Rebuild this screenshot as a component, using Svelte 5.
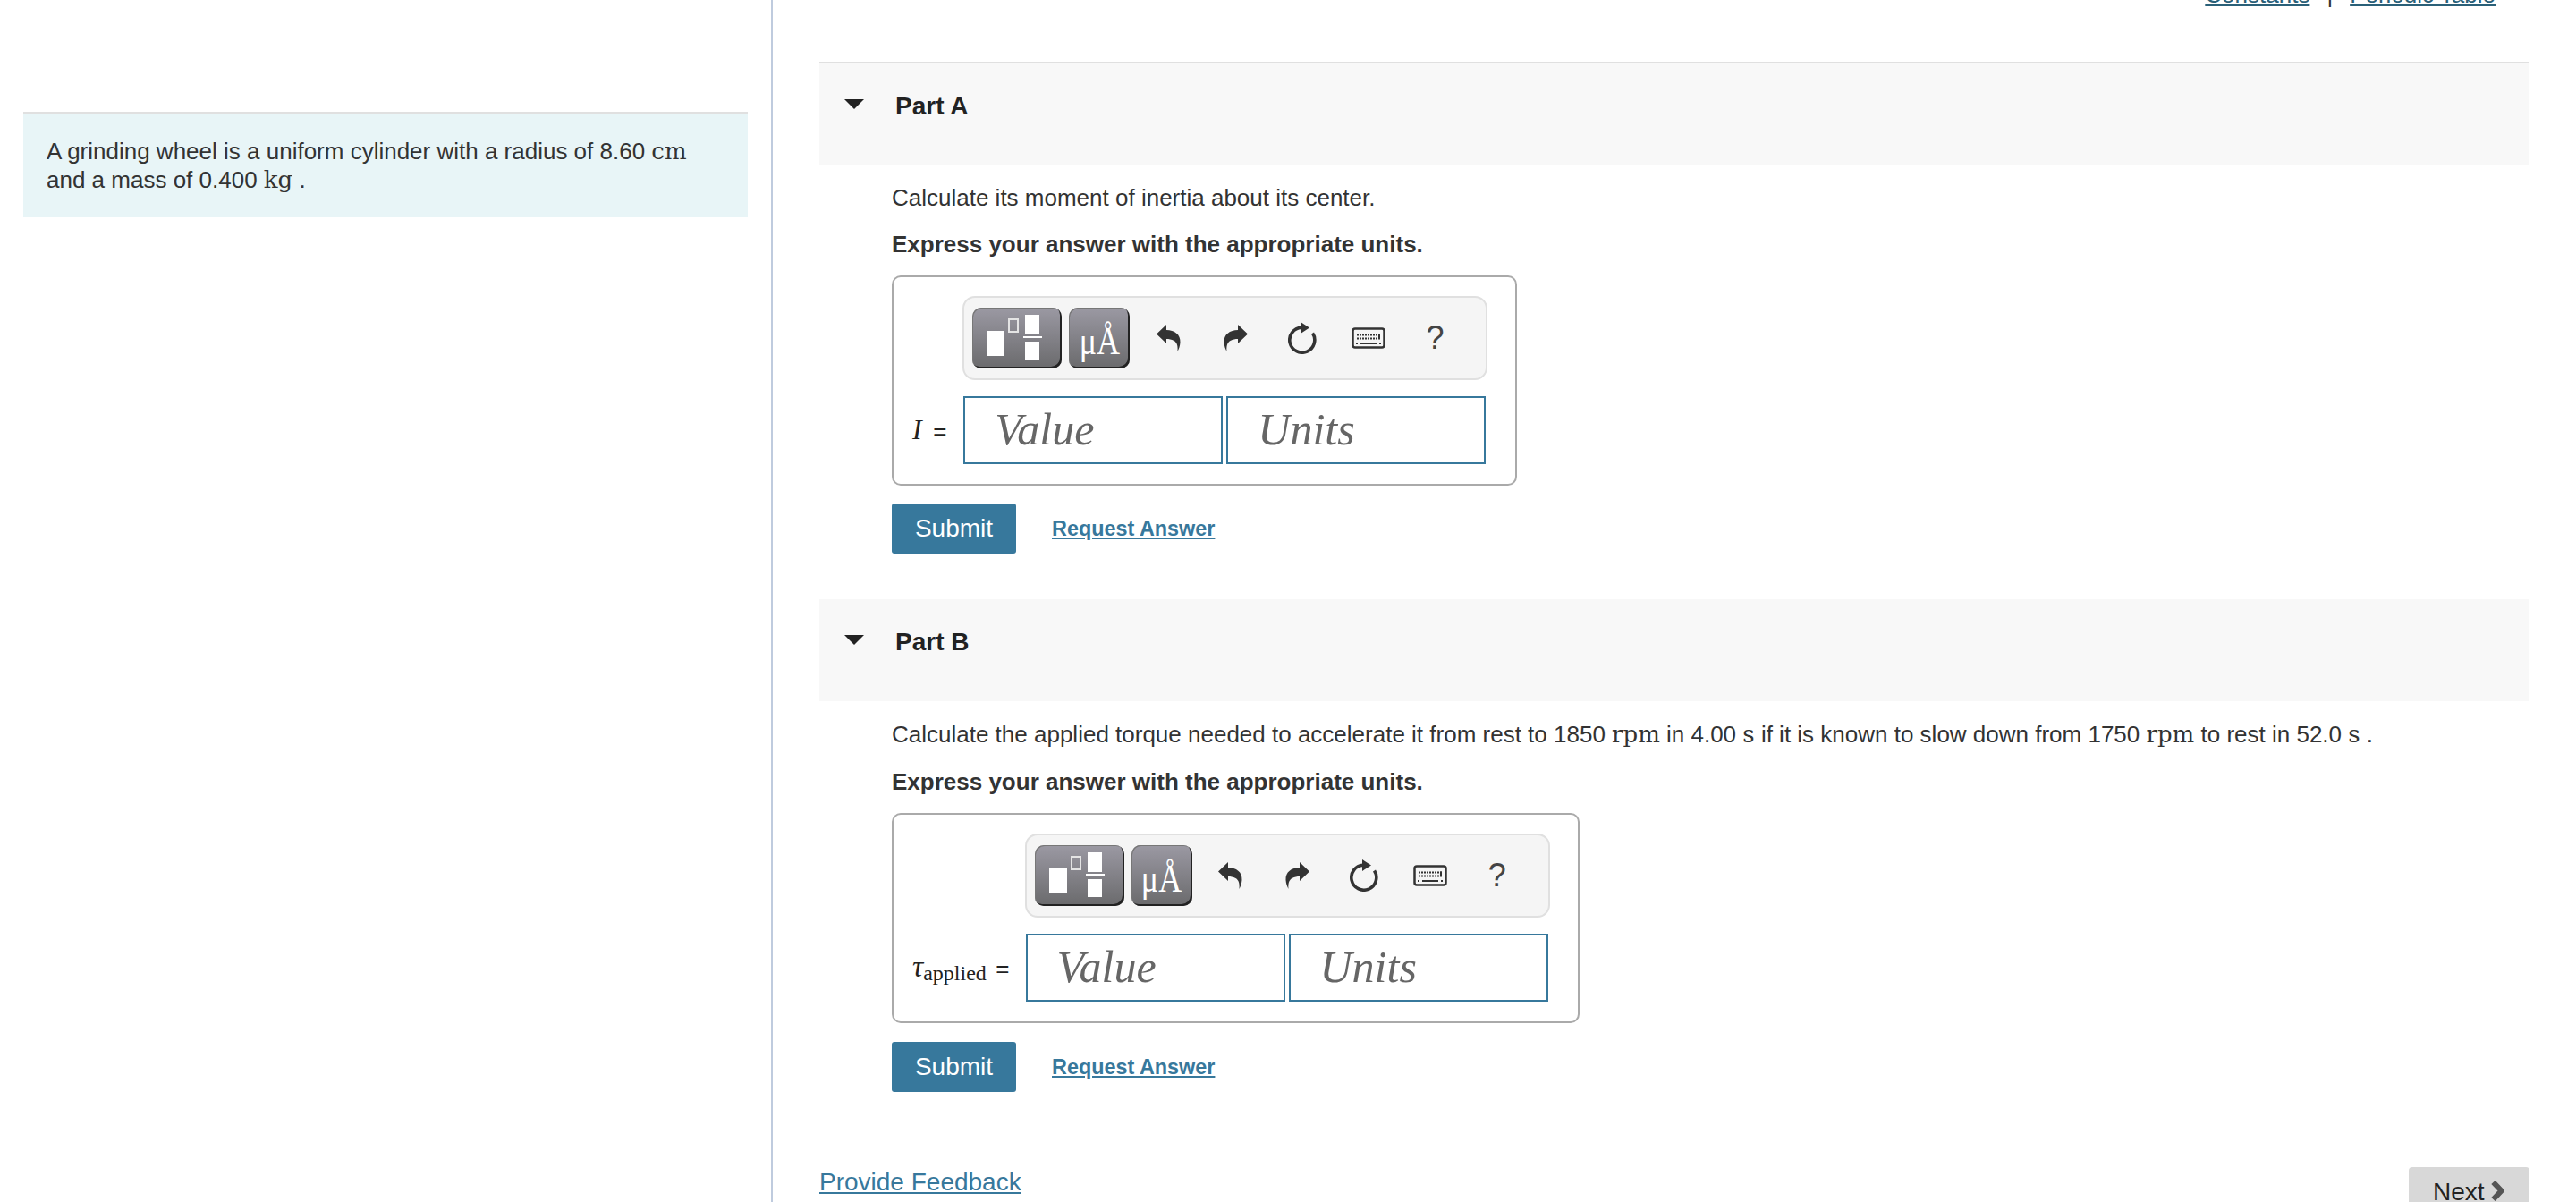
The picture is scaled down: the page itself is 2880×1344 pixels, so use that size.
<script>
	const parts = [
		{ id: 'A', label: 'label-i' },
		{ id: 'B', label: 'label-tau' }
	];
	const keyRows = [
		{ y: 7.5, xs: [6, 9, 12, 15, 18, 21, 24, 27, 30] },
		{ y: 11.5, xs: [6, 9, 12, 15, 18, 21, 24, 27] }
	];
</script>

<div class="page">
	<aside class="side">
		<div class="intro">
			A grinding wheel is a uniform cylinder with a radius of 8.60 <span class="m">cm</span><br />
			and a mass of 0.400 <span class="m">kg</span> .
		</div>
	</aside>

	<main class="main">
		<div class="top-links">
			<a href="#constants">Constants</a>
			<span class="sep">|</span>
			<a href="#table">Periodic Table</a>
		</div>

		{#each parts as part}
			<section class="part part-{part.id}">
				<header class="part-head">
					<svg class="caret" viewBox="0 0 22 11" width="22" height="11"><path d="M0 0H22L11 11Z" fill="#222" /></svg>
					<h2>Part {part.id}</h2>
				</header>
				<div class="part-body">
					{#if part.id === 'A'}
						<p class="lead">Calculate its moment of inertia about its center.</p>
					{:else}
						<p class="lead">
							Calculate the applied torque needed to accelerate it from rest to 1850 <span class="m">rpm</span> in 4.00 <span class="m">s</span>
							if it is known to slow down from 1750 <span class="m">rpm</span> to rest in 52.0 <span class="m">s</span> .
						</p>
					{/if}
					<p class="strong">Express your answer with the appropriate units.</p>

					<div class="answer-box">
						<div class="toolbar">
							<div class="tool tool-frac">
								<svg viewBox="0 0 100 68" width="100" height="68">
									<rect x="16" y="26" width="20" height="28" fill="#fff" />
									<rect x="41" y="13" width="10" height="14" fill="none" stroke="#e4e4e4" stroke-width="2" />
									<rect x="59" y="8" width="16" height="22" fill="#fff" />
									<rect x="57" y="32" width="21" height="2" fill="#fff" />
									<rect x="59" y="38" width="16" height="20" fill="#fff" />
								</svg>
							</div>
							<div class="tool tool-unit"><span>μÅ</span></div>
							<div class="slot">
								<svg viewBox="0 0 28 30" width="28" height="30"><path d="M0 10.5L11 0V6C20 6 27 11 26.5 20C26.2 24 25 27 23.5 30C24 24 23 20 19.5 18C16.5 16.5 14 16 11 16V21Z" fill="#333" /></svg>
							</div>
							<div class="slot">
								<svg viewBox="0 0 28 30" width="28" height="30"><path d="M28 10.5L17 0V6C8 6 1 11 1.5 20C1.8 24 3 27 4.5 30C4 24 5 20 8.5 18C11.5 16.5 14 16 17 16V21Z" fill="#333" /></svg>
							</div>
							<div class="slot">
								<svg viewBox="0 0 32 36" width="32" height="36">
									<path d="M27.5 12.5A14 14 0 1 1 15 6.2" fill="none" stroke="#333" stroke-width="3.6" />
									<path d="M14 0L24 6.5L14 13Z" fill="#333" />
								</svg>
							</div>
							<div class="slot">
								<svg viewBox="0 0 38 24" width="38" height="24">
									<rect x="1.5" y="1.5" width="35" height="21" rx="2.5" fill="#f5f5f5" stroke="#333" stroke-width="2.5" />
									{#each keyRows as row}
										{#each row.xs as x}
											<rect {x} y={row.y} width="2" height="2" fill="#333" />
										{/each}
									{/each}
									<rect x="30" y="7.5" width="2" height="6" fill="#333" />
									<rect x="5" y="17" width="2" height="2" fill="#333" />
									<rect x="10" y="17" width="18" height="2" fill="#333" />
									<rect x="31" y="17" width="2" height="2" fill="#333" />
								</svg>
							</div>
							<div class="slot help">?</div>
						</div>

						<div class="eq-label {part.label}">
							{#if part.id === 'A'}
								<i>I</i> <span class="eq">=</span>
							{:else}
								<i class="tau">τ</i><span class="sub">applied</span> <span class="eq">=</span>
							{/if}
						</div>
						<div class="field">Value</div>
						<div class="field field-units">Units</div>
					</div>

					<div class="actions">
						<button class="submit">Submit</button>
						<a class="request" href="#answer">Request Answer</a>
					</div>
				</div>
			</section>
		{/each}

		<footer class="foot">
			<a class="feedback" href="#feedback">Provide Feedback</a>
			<button class="next">
				Next
				<svg viewBox="0 0 15 23" width="15" height="23"><path d="M2.5 2L11.5 11.5L2.5 21" fill="none" stroke="#555" stroke-width="6" /></svg>
			</button>
		</footer>
	</main>
</div>

<style>
	:global(body) {
		margin: 0;
		background: #fff;
	}

	.page {
		display: flex;
		width: 2880px;
		height: 1344px;
		overflow: hidden;
		font-family: "Liberation Sans", Arial, sans-serif;
		font-size: 26px;
		line-height: 32px;
		color: #333;
	}

	.side {
		flex: 0 0 862px;
		box-sizing: content-box;
		border-right: 2px solid #bfcbde;
		padding-top: 125px;
	}

	.intro {
		margin: 0 26px;
		padding: 25px 26px 26px;
		background: #e8f5f7;
		border-top: 3px solid #e0e0e0;
	}

	.m {
		font-family: "DejaVu Serif", "Liberation Serif", serif;
		font-size: 26px;
		line-height: 0;
	}

	.main {
		flex: 1;
		padding: 0 52px;
		min-width: 0;
	}

	.top-links {
		display: flex;
		justify-content: flex-end;
		gap: 19px;
		margin-top: -22px;
		margin-bottom: 59px;
		padding-right: 38px;
	}

	.top-links a {
		color: #2a6078;
	}

	.sep {
		color: #333;
	}

	.part-head {
		display: flex;
		align-items: flex-start;
		height: 114px;
		box-sizing: border-box;
		background: #f8f8f8;
		padding: 32px 0 0 28px;
	}

	.part-A .part-head {
		height: 115px;
		border-top: 2px solid #e0e0e0;
	}

	.part-B {
		margin-top: 51px;
	}

	.caret {
		margin-top: 8px;
	}

	h2 {
		margin: 0 0 0 35px;
		font-size: 28px;
		line-height: 32px;
		font-weight: 700;
		color: #222;
	}

	.part-body {
		padding-left: 81px;
	}

	p {
		margin: 0;
	}

	.lead {
		margin-top: 21px;
	}

	.strong {
		margin-top: 20px;
		font-weight: 700;
	}

	.part-B .strong {
		margin-top: 21px;
	}

	.answer-box {
		display: inline-grid;
		grid-template-columns: auto 290px 290px;
		column-gap: 4px;
		row-gap: 18px;
		margin-top: 19px;
		padding: 21px 33px 22px 21px;
		border: 2px solid #aaa;
		border-radius: 10px;
		background: #fff;
	}

	.toolbar {
		grid-column: 2 / 4;
		display: flex;
		align-items: center;
		height: 94px;
		box-sizing: border-box;
		margin: 0 -2px 0 -1px;
		padding-left: 9px;
		background: #f5f5f5;
		border: 2px solid #e0e0e0;
		border-radius: 14px;
	}

	.tool {
		height: 68px;
		box-sizing: border-box;
		border-radius: 10px;
		background: linear-gradient(#9b99a3, #6a6a6c);
		box-shadow: inset -2px -2px 0 #222, inset 1px 1px 0 #777;
		color: #fff;
	}

	.tool svg {
		display: block;
	}

	.tool-frac {
		width: 100px;
	}

	.tool-unit {
		width: 68px;
		margin-left: 8px;
		display: flex;
		align-items: center;
		justify-content: center;
		font-family: "Liberation Serif", "Times New Roman", serif;
		font-size: 36px;
	}

	.tool-unit span {
		transform: translateY(3px) scaleY(1.25);
	}

	.slot {
		flex: 0 0 74.5px;
		display: flex;
		align-items: center;
		justify-content: center;
	}

	.tool-unit + .slot {
		margin-left: 6px;
	}

	.help {
		font-size: 36px;
		line-height: 40px;
		color: #444;
	}

	.eq-label {
		grid-column: 1;
		align-self: center;
		padding-right: 14px;
		font-family: "Liberation Serif", "Times New Roman", serif;
		color: #222;
		white-space: nowrap;
	}

	.label-i {
		padding-right: 15px;
	}

	.eq-label i {
		font-size: 32px;
	}

	.eq {
		font-family: "Liberation Sans", Arial, sans-serif;
		font-size: 26px;
		margin-left: 4px;
	}

	.label-i .eq {
		margin-left: 6px;
	}

	.tau {
		font-size: 34px !important;
	}

	.sub {
		font-size: 24px;
		position: relative;
		top: 4px;
	}

	.field {
		height: 76px;
		box-sizing: border-box;
		padding-left: 33px;
		border: 2px solid #37789c;
		font-family: "Liberation Serif", "Times New Roman", serif;
		font-style: italic;
		font-size: 50px;
		line-height: 70px;
		color: #666;
	}

	.actions {
		display: flex;
		align-items: center;
		gap: 40px;
		margin-top: 20px;
	}

	.part-B .actions {
		margin-top: 21px;
	}

	.submit {
		width: 139px;
		height: 56px;
		padding: 0;
		border: 0;
		border-radius: 3px;
		background: #37789c;
		color: #fff;
		font: 28px/32px "Liberation Sans", Arial, sans-serif;
	}

	.request {
		font-size: 23.4px;
		font-weight: 700;
		color: #37789c;
	}

	.foot {
		display: flex;
		justify-content: space-between;
		align-items: flex-start;
		margin-top: 84px;
	}

	.feedback {
		margin-top: 1px;
		font-size: 28px;
		color: #37789c;
	}

	.next {
		display: flex;
		align-items: flex-start;
		gap: 7px;
		width: 135px;
		height: 80px;
		padding: 12px 0 0 27px;
		box-sizing: border-box;
		border: 0;
		border-radius: 4px;
		background: #d8d8d8;
		color: #222;
		font: 28px/32px "Liberation Sans", Arial, sans-serif;
	}

	.next svg {
		margin-top: 3px;
	}
</style>
